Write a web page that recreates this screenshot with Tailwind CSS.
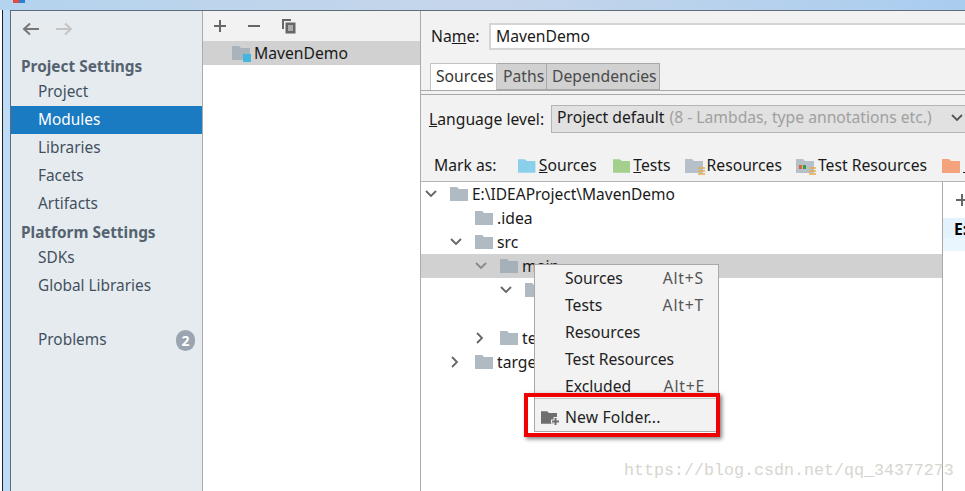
<!DOCTYPE html>
<html lang="en">
<head>
    <meta charset="UTF-8">
    <title>Project Structure</title>
    <script src="https://cdn.jsdelivr.net/npm/@tailwindcss/browser@4"></script>
</head>
<body class="bg-white">
    <svg class="hidden">
        <symbol id="folder" viewBox="0 0 18 14"><path d="M0 0h7l2 2h9v12H0z" fill="currentColor"/></symbol>
        <symbol id="down" viewBox="0 0 12 8"><path d="M1 1l5 5 5-5" fill="none" stroke="currentColor" stroke-width="1.8"/></symbol>
        <symbol id="right" viewBox="0 0 8 12"><path d="M1 1l5 5-5 5" fill="none" stroke="currentColor" stroke-width="1.8"/></symbol>
    </svg>

    <div class="relative w-[965px] h-[491px] overflow-hidden font-['Noto_Sans',sans-serif] text-[15.7px] text-[#1a1a1a]">
        <!-- desktop behind the window -->
        <div class="relative h-[10px] bg-gradient-to-r from-[#b4d3ee] via-[#c6d6ea] to-[#a9cdef]">
            <div class="absolute left-[13px] top-0 w-[6px] h-[3px] bg-[#e8473f]"></div>
            <div class="absolute left-[19px] top-0 w-[6px] h-[3px] bg-[#2a7fd0]"></div>
        </div>

        <div class="flex h-[481px]">
            <div class="w-[10px] shrink-0 bg-[#bcdcf8] border-l-2 border-white">
                <div class="w-px h-full bg-[#222]"></div>
            </div>

            <div class="flex flex-1 min-w-0 border-t border-l border-[#5f6c7b]">
                <!-- sidebar -->
                <aside class="w-[192px] shrink-0 bg-[#e6ebf0] border-r border-[#a8acb0] text-[15.4px] text-[#42505e]">
                    <div class="flex items-center gap-[17px] pl-[11px] h-[36px]">
                        <svg class="w-[17px] h-[14px]" viewBox="0 0 17 14"><path d="M17 7H2M8 1.500L2 7l6 5.500" fill="none" stroke="#777" stroke-width="2"/></svg>
                        <svg class="w-[17px] h-[14px]" viewBox="0 0 17 14"><path d="M0 7h15M9 1.500L15 7l-6 5.500" fill="none" stroke="#c4c4c4" stroke-width="2"/></svg>
                    </div>
                    <div class="h-[24px] mt-[8px] pl-[10px] font-bold leading-[24px] text-[#55626f]">Project Settings</div>
                    <div class="h-[28px] mt-[-1px] pl-[27px] leading-[28px]">Project</div>
                    <div class="h-[28px] pl-[27px] leading-[28px] bg-[#1a7bc3] text-white">Modules</div>
                    <div class="h-[28px] pl-[27px] leading-[28px]">Libraries</div>
                    <div class="h-[28px] pl-[27px] leading-[28px]">Facets</div>
                    <div class="h-[28px] pl-[27px] leading-[28px]">Artifacts</div>
                    <div class="h-[29px] pl-[10px] font-bold leading-[30px] text-[#55626f]">Platform Settings</div>
                    <div class="h-[28px] mt-[-3px] pl-[27px] leading-[28px]">SDKs</div>
                    <div class="h-[28px] pl-[27px] leading-[28px]">Global Libraries</div>
                    <div class="flex items-center justify-between h-[28px] mt-[26px] pl-[27px] pr-[7px]">
                        <span>Problems</span>
                        <span class="flex items-center justify-center w-[19px] h-[21px] rounded-full bg-[#9aa5b1] text-white font-bold text-[14px]">2</span>
                    </div>
                </aside>

                <!-- module list -->
                <section class="w-[218px] shrink-0 border-r border-[#a8acb0]">
                    <div class="flex items-center gap-[20px] pl-[10px] h-[30px] bg-[#f2f2f2]">
                        <svg class="w-[14px] h-[14px]" viewBox="0 0 14 14"><path d="M7 1v12M1 7h12" stroke="#666" stroke-width="2"/></svg>
                        <svg class="w-[14px] h-[14px]" viewBox="0 0 14 14"><path d="M1 7h12" stroke="#666" stroke-width="2"/></svg>
                        <svg class="w-[16px] h-[16px]" viewBox="0 0 16 16"><path d="M1 1h9v2H3v8H1z" fill="#666"/><path d="M4.500 4.500h10v11h-10z" fill="#666"/><path d="M7 8h5M7 10h5M7 12h5" stroke="#f2f2f2"/></svg>
                    </div>
                    <div class="flex items-center h-[24px] pl-[29px] bg-[#d1d1d1]">
                        <span class="relative w-[18px] h-[14px] text-[#a9b3bb]">
                            <svg class="w-[18px] h-[14px]"><use href="#folder"/></svg>
                            <span class="absolute right-[-1px] bottom-[-2px] w-[8px] h-[8px] bg-[#40b6e0]"></span>
                        </span>
                        <span class="ml-[4px] pt-[2px]">MavenDemo</span>
                    </div>
                </section>

                <!-- module details -->
                <main class="flex flex-col flex-1 min-w-0 bg-[#f2f2f2]">
                    <div class="flex items-center h-[51px] shrink-0 pl-[10px]">
                        <span class="w-[58px]">Na<span class="underline">m</span>e:</span>
                        <div class="flex-1 h-[27px] pl-[5px] leading-[22px] bg-white border-2 border-[#d5d5d5] border-r-0">MavenDemo</div>
                    </div>

                    <div class="flex h-[28px] shrink-0 mt-[1px] pl-[9px] border-b border-[#a8a8a8] text-[#4a4a4a]">
                        <div class="w-[67px] h-[27px] pl-[5px] leading-[25px] bg-white border border-b-0 border-[#c4c4c4] text-[#333]">Sources</div>
                        <div class="w-[50px] h-[27px] pl-[6px] leading-[25px] bg-[#d1d1d1] border border-[#a8a8a8] border-l-0">Paths</div>
                        <div class="w-[113px] h-[27px] pl-[5px] leading-[25px] bg-[#d1d1d1] border border-[#a8a8a8] border-l-0">Dependencies</div>
                    </div>

                    <div class="flex items-center h-[48px] shrink-0 mt-[3px] border-t border-[#a8a8a8] pl-[8px] whitespace-nowrap">
                        <span class="w-[122px] pt-[3px]"><span class="underline">L</span>anguage level:</span>
                        <div class="flex-1 flex items-center h-[28px] pl-[5px] pb-[1px] bg-[#e1e1e1] border border-[#b5b5b5] border-r-0">
                            Project default
                            <span class="ml-[5px] text-[#a0a0a0]">(8 - Lambdas, type annotations etc.)</span>
                            <svg class="ml-[19px] w-[12px] h-[8px] text-[#555]"><use href="#down"/></svg>
                        </div>
                    </div>

                    <div class="flex items-center h-[30px] shrink-0 mt-[9px] pl-[13px] whitespace-nowrap">
                        <span class="w-[86px]">Mark as:</span>
                        <svg class="w-[18px] h-[14px] text-[#8bd0ea]"><use href="#folder"/></svg>
                        <span class="ml-[3px]"><span class="underline">S</span>ources</span>
                        <svg class="ml-[16px] w-[18px] h-[14px] text-[#a3d08c]"><use href="#folder"/></svg>
                        <span class="ml-[3px]"><span class="underline">T</span>ests</span>
                        <span class="relative ml-[14px] w-[18px] h-[14px] text-[#b6c0c8]">
                            <svg class="w-[18px] h-[14px]"><use href="#folder"/></svg>
                            <svg class="absolute right-[-3px] bottom-[-3px] w-[9px] h-[10px]" viewBox="0 0 9 10"><path d="M1 2h7M1 5h7M1 8h7" stroke="#e6a94a" stroke-width="1.500"/></svg>
                        </span>
                        <span class="ml-[4px]">Resources</span>
                        <span class="relative ml-[14px] w-[18px] h-[14px] text-[#b6c0c8]">
                            <svg class="w-[18px] h-[14px]"><use href="#folder"/></svg>
                            <span class="absolute left-[3px] top-[6px] w-[3px] h-[4px] bg-[#e0642c]"></span>
                            <span class="absolute left-[7px] top-[6px] w-[3px] h-[4px] bg-[#3a9a4c]"></span>
                            <svg class="absolute right-[-3px] bottom-[-3px] w-[9px] h-[10px]" viewBox="0 0 9 10"><path d="M1 2h7M1 5h7M1 8h7" stroke="#e6a94a" stroke-width="1.500"/></svg>
                        </span>
                        <span class="ml-[4px]">Test Resources</span>
                        <svg class="ml-[15px] w-[18px] h-[14px] shrink-0 text-[#f5a37c]"><use href="#folder"/></svg>
                        <span class="ml-[3px] mt-[13px] w-[2px] h-px shrink-0 bg-[#222]"></span>
                    </div>

                    <div class="flex flex-1 min-h-0 border-t border-[#b5b5b5] bg-white">
                        <!-- content tree -->
                        <div class="w-[522px] shrink-0 border-r border-[#a8a8a8]">
                            <div class="flex items-center h-[24px] pl-[4px]">
                                <svg class="w-[12px] h-[8px] text-[#666]"><use href="#down"/></svg>
                                <svg class="ml-[13px] w-[18px] h-[14px] text-[#afbac2]"><use href="#folder"/></svg>
                                <span class="ml-[4px] pt-[2px] text-[15.5px]">E:\IDEAProject\MavenDemo</span>
                            </div>
                            <div class="flex items-center h-[24px] pl-[54px]">
                                <svg class="w-[18px] h-[14px] text-[#afbac2]"><use href="#folder"/></svg>
                                <span class="ml-[4px] pt-[2px]">.idea</span>
                            </div>
                            <div class="flex items-center h-[24px] pl-[29px]">
                                <svg class="w-[12px] h-[8px] text-[#666]"><use href="#down"/></svg>
                                <svg class="ml-[13px] w-[18px] h-[14px] text-[#afbac2]"><use href="#folder"/></svg>
                                <span class="ml-[4px] pt-[2px]">src</span>
                            </div>
                            <div class="flex items-center h-[24px] pl-[54px] bg-[#d1d1d1]">
                                <svg class="w-[12px] h-[8px] text-[#888]"><use href="#down"/></svg>
                                <svg class="ml-[13px] w-[18px] h-[14px] text-[#a5b0b9]"><use href="#folder"/></svg>
                                <span class="ml-[4px] pt-[2px]">main</span>
                            </div>
                            <div class="flex items-center h-[24px] pl-[79px]">
                                <svg class="w-[12px] h-[8px] text-[#666]"><use href="#down"/></svg>
                                <svg class="ml-[13px] w-[18px] h-[14px] text-[#afbac2]"><use href="#folder"/></svg>
                            </div>
                            <div class="h-[24px]"></div>
                            <div class="flex items-center h-[24px] pl-[55px]">
                                <svg class="w-[8px] h-[12px] text-[#666]"><use href="#right"/></svg>
                                <svg class="ml-[16px] w-[18px] h-[14px] text-[#afbac2]"><use href="#folder"/></svg>
                                <span class="ml-[4px] pt-[2px]">test</span>
                            </div>
                            <div class="flex items-center h-[24px] pl-[30px]">
                                <svg class="w-[8px] h-[12px] text-[#666]"><use href="#right"/></svg>
                                <svg class="ml-[16px] w-[18px] h-[14px] text-[#afbac2]"><use href="#folder"/></svg>
                                <span class="ml-[4px] pt-[2px]">target</span>
                            </div>
                        </div>
                        <!-- content roots -->
                        <div class="flex-1 min-w-0 overflow-hidden bg-white">
                            <div class="h-[36px] pl-[12px] pt-[11px] bg-white">
                                <svg class="w-[14px] h-[14px]" viewBox="0 0 14 14"><path d="M7 1v12M1 7h12" stroke="#666" stroke-width="2"/></svg>
                            </div>
                            <div class="h-[20px] pl-[11px] leading-[22px] font-bold text-black bg-[#e4f2fd]">E:</div>
                            <div class="h-[13px] bg-[#eaf6fe]"></div>
                        </div>
                    </div>
                </main>
            </div>
        </div>

        <!-- Mark as popup -->
        <div class="absolute left-[534px] top-[264px] w-[185px] h-[168px] bg-[#f2f2f2] border border-[#a8a8a8] text-[#222]">
            <div class="flex justify-between h-[27px] pl-[30px] pr-[14px] leading-[27px]"><span>Sources</span><span class="text-[#555] tracking-[0.8px]">Alt+S</span></div>
            <div class="flex justify-between h-[27px] pl-[30px] pr-[14px] leading-[27px]"><span>Tests</span><span class="text-[#555] tracking-[0.8px]">Alt+T</span></div>
            <div class="h-[27px] pl-[30px] leading-[27px]">Resources</div>
            <div class="h-[27px] pl-[30px] leading-[27px]">Test Resources</div>
            <div class="flex justify-between h-[27px] pl-[30px] pr-[13px] leading-[27px]"><span>Excluded</span><span class="text-[#555] tracking-[0.8px]">Alt+E</span></div>
            <div class="h-px mt-[-2px] bg-[#c4c4c4]"></div>
            <div class="flex items-center h-[30px] mt-[3px] pl-[6px]">
                <span class="relative w-[16px] h-[13px] text-[#6e6e6e]">
                    <svg class="w-[16px] h-[13px]"><use href="#folder"/></svg>
                    <svg class="absolute right-[-3px] bottom-[-2px] w-[9px] h-[9px]" viewBox="0 0 9 9"><path d="M4.500 0v9M0 4.500h9" stroke="#f2f2f2" stroke-width="4"/><path d="M4.500 1v7M1 4.500h7" stroke="#6e6e6e" stroke-width="2"/></svg>
                </span>
                <span class="ml-[8px] pt-[2px] tracking-[0.15px]">New Folder...</span>
            </div>
        </div>

        <!-- red highlight -->
        <div class="absolute left-[524px] top-[393px] w-[196px] h-[44px] border-[4px] border-[#f00000] shadow-[2px_2px_4px_rgba(0,0,0,0.5)]"></div>

        <!-- watermark -->
        <div class="absolute left-[624px] top-[461px] font-['Liberation_Mono',monospace] text-[16.67px] leading-[20px] text-[#d6d6d0] whitespace-nowrap">https://blog.csdn.net/qq_34377273</div>
    </div>
</body>
</html>
